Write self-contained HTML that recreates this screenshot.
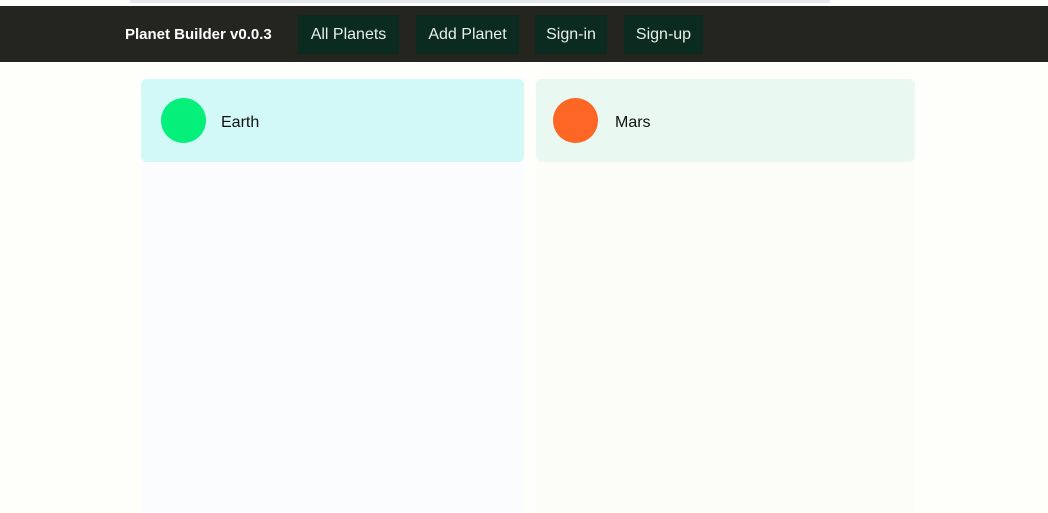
<!DOCTYPE html>
<html><head><meta charset="utf-8"><style>
*{margin:0;padding:0;box-sizing:border-box}
body{width:1048px;height:513px;overflow:hidden;background:#fefefa;font-family:"Liberation Sans",sans-serif;position:relative}
.topbar{position:absolute;left:130px;top:0;width:700px;height:3px;background:#e6e8ee}
nav{position:absolute;left:0;top:6px;width:1048px;height:56px;background:#25251f}
.brand{position:absolute;left:125px;top:20px;color:#fff;font-weight:bold;font-size:15px}
.btn{position:absolute;top:9px;height:39px;background:#0b2a20;color:#e8efe8;font-size:16px;line-height:39px;text-align:center}
.col{position:absolute;top:79px;height:434px}
.card{position:absolute;left:0;top:0;right:0;height:83px;border-radius:6px}
.dot{position:absolute;top:19px;width:45px;height:45px;border-radius:50%}
.name{position:absolute;top:35px;font-size:16px;color:#111}
</style></head><body>
<div class="topbar"></div>
<nav>
<div class="brand">Planet Builder v0.0.3</div>
<div class="btn" style="left:298px;width:101px">All Planets</div>
<div class="btn" style="left:416px;width:103px">Add Planet</div>
<div class="btn" style="left:535px;width:72px">Sign-in</div>
<div class="btn" style="left:624px;width:79px">Sign-up</div>
</nav>
<div class="col" style="left:141px;width:383px;background:#fbfcfe">
<div class="card" style="background:#d2f8f8"></div>
<div class="dot" style="left:20px;background:#05f07a"></div>
<div class="name" style="left:80px">Earth</div>
</div>
<div class="col" style="left:536px;width:379px;background:#fcfdf6">
<div class="card" style="background:#eaf8f2"></div>
<div class="dot" style="left:17px;background:#fd6624"></div>
<div class="name" style="left:79px">Mars</div>
</div>
</body></html>
